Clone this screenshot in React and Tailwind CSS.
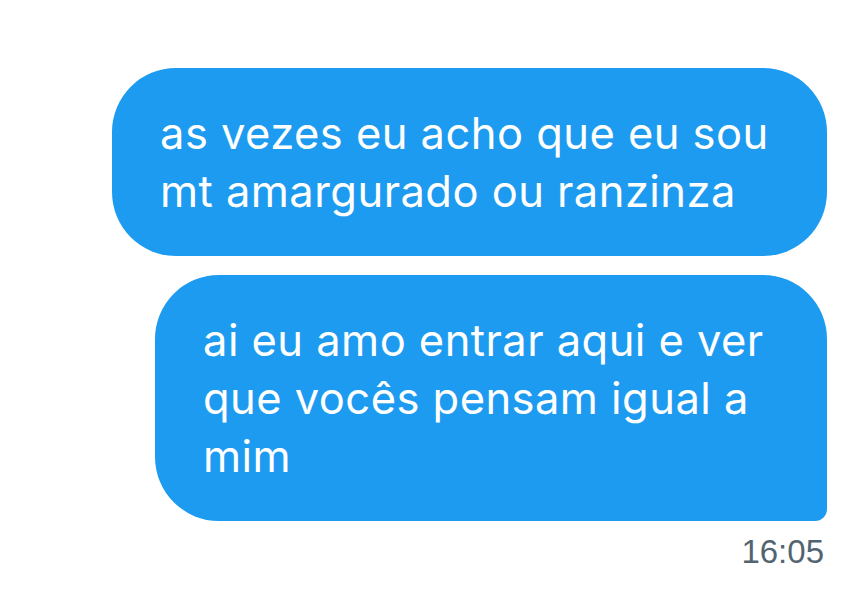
export default function App() {
  const messages = [
    { id: 1, lines: ['as vezes eu acho que eu sou', 'mt amargurado ou ranzinza'], width: 'w-[715px]', last: false },
    { id: 2, lines: ['ai eu amo entrar aqui e ver', 'que vocês pensam igual a', 'mim'], width: 'w-[672px]', last: true },
  ];

  return (
    <div className="w-[853px] h-[604px] bg-white overflow-hidden" style={{ fontFamily: 'Inter, "Liberation Sans", sans-serif' }}>
      <div className="flex flex-col items-end pt-[68px] pr-[26px] gap-[19px]">
        {messages.map(m => (
          <div
            key={m.id}
            className={`${m.width} bg-[#1d9bf0] text-white pl-[48px] pr-[30px] py-[36px] text-[43.5px] leading-[58px] tracking-[0.45px] ${
              m.last ? 'rounded-[64px] rounded-br-[12px]' : 'rounded-[64px]'
            }`}
          >
            {m.lines.map((l, i) => (
              <div key={i} className="whitespace-nowrap">{l}</div>
            ))}
          </div>
        ))}
      </div>
      <div className="flex justify-end pr-[29px] mt-[11px]">
        <span className="text-[#536471] text-[33px] leading-[40px]" style={{ fontFamily: '"Liberation Sans", Arial, sans-serif' }}>16:05</span>
      </div>
    </div>
  );
}
